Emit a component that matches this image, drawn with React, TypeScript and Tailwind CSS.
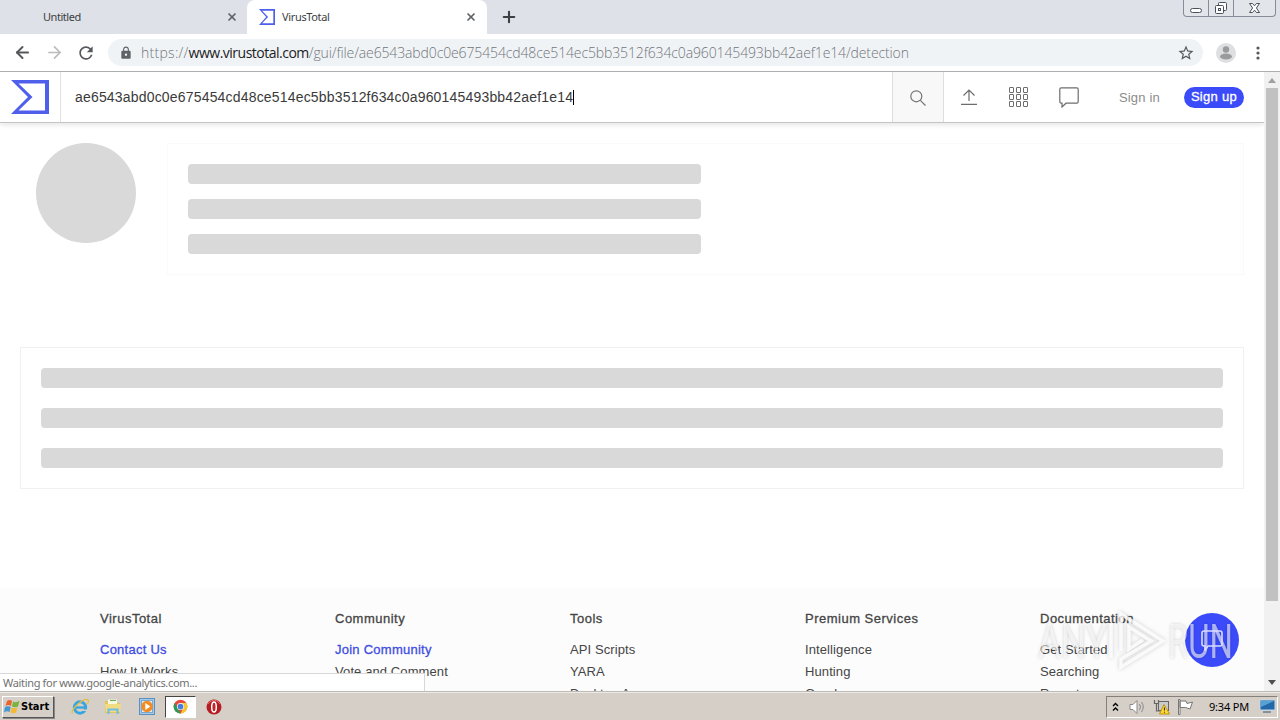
import { ArrowLeft, ArrowRight, Plus, X } from "lucide-react";
import { MdLock, MdRefresh, MdStarBorder } from "react-icons/md";

const HASH = "ae6543abd0c0e675454cd48ce514ec5bb3512f634c0a960145493bb42aef1e14";

const FOOTER_COLUMNS = [
  { title: "VirusTotal", links: ["Contact Us", "How It Works"], highlight: true },
  { title: "Community", links: ["Join Community", "Vote and Comment"], highlight: true },
  { title: "Tools", links: ["API Scripts", "YARA", "Desktop Apps"] },
  { title: "Premium Services", links: ["Intelligence", "Hunting", "Graph"] },
  { title: "Documentation", links: ["Get Started", "Searching", "Reports"] },
];

function VtLogo({ className }: { className: string }) {
  return (
    <svg viewBox="0 0 38 34" className={className} preserveAspectRatio="none" aria-hidden>
      <path
        fill="#4e5fec"
        fillRule="evenodd"
        d="M0 0H38V34H0L17 17ZM7.5 3.5L21.5 17L7.5 30.5H34V3.5Z"
      />
    </svg>
  );
}

function TabStrip() {
  return (
    <div className="flex h-[34px] bg-[#dee1e7] font-['Noto_Sans',sans-serif] text-[11px] text-[#3c4043]">
      <div className="flex w-[247px] items-center rounded-br-lg pl-[43px] pr-[9px]">
        <span className="flex-1 tracking-[-0.45px]">Untitled</span>
        <X size={12} strokeWidth={3.4} className="text-[#5f6368]" />
      </div>
      <div className="flex w-[240px] items-center rounded-t-lg bg-white pl-3 pr-[10px]">
        <VtLogo className="h-4 w-4" />
        <span className="ml-[7px] flex-1 tracking-[-0.35px]">VirusTotal</span>
        <X size={12} strokeWidth={3.4} className="text-[#5f6368]" />
      </div>
      <Plus size={18} strokeWidth={2.8} className="ml-[13px] mt-2 text-[#3c4043]" />
      <div className="ml-auto mr-1 flex h-[17px] w-[93px] rounded-b border border-t-0 border-[#878d98] bg-[#e2e5ea]">
        <div className="flex w-[25px] items-end justify-center border-r border-[#878d98] pb-[3px]">
          <div className="h-[5px] w-3 rounded-sm border border-[#4b505a] bg-white" />
        </div>
        <div className="flex w-[25px] items-center justify-center border-r border-[#878d98]">
          <svg width="14" height="14" viewBox="0 0 14 14" fill="#fff" stroke="#4b505a">
            <rect x="4.5" y="1.5" width="8" height="8" rx="1" />
            <rect x="1.5" y="4.5" width="8" height="8" rx="1" />
            <rect x="4.5" y="7.5" width="2" height="2" />
          </svg>
        </div>
        <div className="flex flex-1 items-center justify-center">
          <svg width="13" height="12" viewBox="0 0 13 12" fill="#fff" stroke="#4b505a">
            <path d="M1.5 1.5h3l2 2.3l2-2.3h3L8.4 6l3.1 4.5h-3l-2-2.3l-2 2.3h-3L4.6 6Z" />
          </svg>
        </div>
      </div>
    </div>
  );
}

function Toolbar() {
  return (
    <div className="flex h-[38px] items-center border-b border-[#acafad] bg-white pl-[13px] pr-5">
      <ArrowLeft size={19} strokeWidth={2.5} className="text-[#55585c]" />
      <ArrowRight size={19} strokeWidth={2.2} className="ml-[13px] text-[#babcbe]" />
      <MdRefresh size={20} className="ml-[12px] text-[#55585c]" />
      <div className="ml-[12px] flex h-[27px] w-[1095px] items-center rounded-full bg-[#f0f3f6] pl-[11px] pr-[8px]">
        <MdLock size={14} className="text-[#5f6368]" />
        <span className="ml-2 flex-1 whitespace-nowrap font-['Open_Sans',sans-serif] text-[14px] font-light tracking-[-0.13px] text-[#70757a]">
          <span className="tracking-[0.28px]">https://</span>
          <span className="font-normal tracking-[-0.5px] text-[#202124]">www.virustotal.com</span>/gui/file/{HASH}/detection
        </span>
        <MdStarBorder size={18} className="text-[#55585c]" />
      </div>
      <svg width="20" height="20" viewBox="0 0 20 20" className="ml-[13px]">
        <circle cx="10" cy="10" r="10" fill="#dedfe1" />
        <circle cx="10" cy="6.5" r="3.2" fill="#9a9b9d" />
        <ellipse cx="10" cy="13.5" rx="6" ry="3" fill="#9a9b9d" />
      </svg>
      <svg width="4" height="14" viewBox="0 0 4 14" className="ml-auto" fill="#55585c">
        <circle cx="2" cy="2" r="1.6" />
        <circle cx="2" cy="7" r="1.6" />
        <circle cx="2" cy="12" r="1.6" />
      </svg>
    </div>
  );
}

function Header() {
  return (
    <header className="relative flex h-[51px] items-center border-b border-[#c4c4c4] bg-white shadow-[0_2px_5px_rgba(0,0,0,0.1)]">
      <div className="flex h-full w-[61px] items-center border-r border-[#e2e2e2] pl-[11px]">
        <VtLogo className="h-[34px] w-[38px]" />
      </div>
      <div className="flex flex-1 items-center pl-[14px]">
        <span className="text-[14px] tracking-[0.18px] text-[#3a3a3a]">{HASH}</span>
        <span className="h-[15px] w-px bg-black" />
      </div>
      <div className="flex h-full w-[52px] items-center justify-center border-x border-[#dedede] bg-[#f8f8f8]">
        <svg width="16" height="16" viewBox="0 0 16 16" className="mt-px" fill="none" stroke="#747474" strokeWidth="1.2">
          <circle cx="6.3" cy="6.3" r="5.5" />
          <path d="M10.3 10.3L15.5 15.5" />
        </svg>
      </div>
      <div className="flex w-[320px] items-center">
        <svg width="16" height="16" viewBox="0 0 16 16" className="ml-[17px]" fill="none" stroke="#6d6d6d" strokeWidth="1.2">
          <path d="M8 12V1M2.5 6.5L8 1L13.5 6.5M0 15.4H16" />
        </svg>
        <svg width="19" height="20" viewBox="0 0 19 20" className="ml-[32px]" fill="none" stroke="#6d6d6d">
          {[0, 7, 14].map((y) =>
            [0, 7, 14].map((x) => <rect key={`${x}-${y}`} x={x + 0.5} y={y + 0.5} width="4" height="5" rx=".3" />)
          )}
        </svg>
        <svg width="20" height="21" viewBox="0 0 20 21" className="ml-[31px]" fill="none" stroke="#6d6d6d" strokeWidth="1.2">
          <path d="M2.2 .8H17.8Q19.2 .8 19.2 2.2V14.8Q19.2 16.2 17.8 16.2H7L3 20V16.2H2.2Q.8 16.2 .8 14.8V2.2Q.8 .8 2.2 .8Z" />
        </svg>
        <span className="ml-[40px] mt-px w-[65px] text-[13px] tracking-[0.15px] text-[#8c8c8c]">Sign in</span>
        <span className="flex h-[21px] w-[60px] items-center justify-center rounded-full bg-[#3b4bfa] text-[13px] tracking-[0.3px] text-white [-webkit-text-stroke:0.3px_white]">
          Sign up
        </span>
      </div>
    </header>
  );
}

/** Loading placeholders for the file report. */
function Skeleton() {
  return (
    <main className="px-5 pt-5">
      <div className="flex">
        <div className="ml-4 size-[100px] rounded-full bg-[#d9d9d9]" />
        <div className="ml-[31px] flex h-[132px] flex-1 flex-col gap-[15px] border border-[#fafafa] p-5">
          <div className="h-5 w-[513px] rounded bg-[#d9d9d9]" />
          <div className="h-5 w-[513px] rounded bg-[#d9d9d9]" />
          <div className="h-5 w-[513px] rounded bg-[#d9d9d9]" />
        </div>
      </div>
      <div className="mt-[72px] flex h-[142px] flex-col gap-5 border border-[#f0f0f0] p-5">
        <div className="h-5 rounded bg-[#d9d9d9]" />
        <div className="h-5 rounded bg-[#d9d9d9]" />
        <div className="h-5 rounded bg-[#d9d9d9]" />
      </div>
    </main>
  );
}

function Footer() {
  return (
    <footer className="mt-[99px] flex h-[130px] bg-[#fcfcfc] pl-[100px] pt-[21px] text-[13px] text-[#454545]">
      {FOOTER_COLUMNS.map((col) => (
        <div key={col.title} className="w-[235px] shrink-0 whitespace-nowrap">
          <h3 className="leading-5 tracking-[0.5px] [-webkit-text-stroke:0.3px_#454545]">{col.title}</h3>
          <ul className="mt-[10px] leading-[22px] tracking-[0.1px]">
            {col.links.map((link, i) => (
              <li
                key={link}
                className={
                  col.highlight && i === 0
                    ? "tracking-[0.25px] text-[#3f4de2] [-webkit-text-stroke:0.3px_#3f4de2]"
                    : ""
                }
              >
                {link}
              </li>
            ))}
          </ul>
        </div>
      ))}
    </footer>
  );
}

function Scrollbar() {
  return (
    <div className="flex w-4 flex-col items-center bg-[#f1f1f1]">
      <svg width="8" height="5" viewBox="0 0 8 5" className="mt-[6px]" fill="#a0a0a0">
        <path d="M4 0L8 5H0Z" />
      </svg>
      <div className="mt-[5px] h-[513px] w-3 bg-[#c1c1c1]" />
      <svg width="8" height="5" viewBox="0 0 8 5" className="mb-[6px] mt-auto" fill="#505050">
        <path d="M0 0H8L4 5Z" />
      </svg>
    </div>
  );
}

function Watermark() {
  return (
    <div className="absolute left-[1038px] top-[537px] flex h-[64px] items-center font-['Roboto',sans-serif] text-[49px] leading-none text-white/60 [text-shadow:0_0_4px_rgba(0,0,0,0.18)]">
      <span className="w-[71px]">
        <span className="inline-block origin-left scale-x-[0.72]">ANY</span>
      </span>
      <svg width="58" height="64" viewBox="0 0 58 64" fill="none" className="drop-shadow-[0_0_2px_rgba(0,0,0,0.22)]">
        <path d="M2 14V49M12 42V5L54 32L12 58V50L42 32L20 18V40L34 31" stroke="#fff" strokeOpacity=".8" strokeWidth="3.5" />
      </svg>
      <span className="ml-[1px] inline-block origin-left scale-x-[0.67]">RUN</span>
    </div>
  );
}

function Taskbar() {
  return (
    <div className="flex h-7 items-center border-t border-[#eeebe7] bg-[#d5cfc8] pl-[2px] pr-[2px]">
      <div className="flex h-[22px] w-[52px] items-center border border-b-[#555] border-l-white border-r-[#555] border-t-white pl-px shadow-[1px_1px_0_#888]">
        <svg width="17" height="16" viewBox="0 0 17 16" className="shrink-0">
          <path d="M3 2Q6 0 8 2L7 7Q4 5 1.5 7Z" fill="#e7652e" />
          <path d="M9 2.5Q12 4 15.5 2L14 7.5Q11 9 8 7.5Z" fill="#79b442" />
          <path d="M1 8Q4 6.5 6.7 8L5.5 13Q3 11.5 0 13.5Z" fill="#4098d5" />
          <path d="M7.7 8.5Q10 10 13.5 8.5L12 13.5Q9 15 6.4 13.5Z" fill="#f3ba31" />
        </svg>
        <span className="mt-px font-['DejaVu_Sans_Condensed','DejaVu_Sans',sans-serif] text-[11px] font-bold text-black">Start</span>
      </div>
      <svg width="18" height="18" viewBox="0 0 18 18" className="ml-[17px]">
        <circle cx="9" cy="9.5" r="5.7" fill="none" stroke="#37a6df" strokeWidth="3" />
        <path d="M4 9.5H15" stroke="#37a6df" strokeWidth="2.4" />
        <path d="M11 11.5H16V13H11Z" fill="#d5cfc8" />
        <path d="M1.5 15.5C-1 12 13-1 17 2C18 3 17 5 16 6" fill="none" stroke="#e7bd43" strokeWidth="1.3" />
      </svg>
      <svg width="18" height="18" viewBox="0 0 18 18" className="ml-[15px]">
        <path d="M1 3H7L8 5H16V15H1Z" fill="#e2c45c" />
        <path d="M4 1.5H13V6H4Z" fill="#f8f7df" />
        <path d="M6 2.5H12" stroke="#61ae5a" />
        <path d="M1 6H17L16 14H2Z" fill="#f1dc82" />
        <path d="M4.5 16V11.5H13.5V16" fill="none" stroke="#70bee7" strokeWidth="2.2" />
      </svg>
      <svg width="16" height="17" viewBox="0 0 16 17" className="ml-[17px]">
        <rect x=".5" y=".5" width="15" height="16" fill="#a8cae8" stroke="#5791c2" />
        <rect x="2.5" y="2.5" width="11" height="12" fill="#dfedf6" stroke="#78a8cd" />
        <circle cx="8" cy="8.5" r="5.7" fill="#f18b22" />
        <path d="M6.3 5L11.4 8.5L6.3 12Z" fill="#fff" />
      </svg>
      <div className="ml-[10px] flex h-[22px] w-[31px] items-center justify-center border border-b-white border-l-[#444] border-r-white border-t-[#444] bg-white">
        <svg width="15" height="15" viewBox="0 0 24 24">
          <circle cx="12" cy="12" r="11" fill="#e54b3d" />
          <path d="M2.5 6.5L7.5 15L12 23A11 11 0 0 1 2.5 6.5Z" fill="#269d57" />
          <path d="M12 23A11 11 0 0 0 21.5 6.5H12L16.5 15Z" fill="#f6c72e" />
          <circle cx="12" cy="12" r="5.7" fill="#fff" />
          <circle cx="12" cy="12" r="4.6" fill="#477edb" />
        </svg>
      </div>
      <svg width="16" height="16" viewBox="0 0 16 16" className="ml-[10px]">
        <circle cx="8" cy="8" r="7.5" fill="#b61c22" />
        <path d="M2 5Q8-3 14 5" fill="none" stroke="#dc6868" />
        <ellipse cx="8" cy="8" rx="2.3" ry="5" fill="#bd252b" stroke="#fff" strokeWidth="1.5" />
      </svg>
      <div className="ml-auto flex h-[22px] w-[172px] items-center border border-b-white border-l-[#858079] border-r-white border-t-[#858079] pl-[5px]">
        <svg width="7" height="10" viewBox="0 0 7 10" fill="none" stroke="#000" strokeWidth="1.4">
          <path d="M1 4L3.5 1.5L6 4M1 8.5L3.5 6L6 8.5" />
        </svg>
        <svg width="18" height="16" viewBox="0 0 18 16" className="ml-[10px]" fill="none" stroke="#898989">
          <path d="M1 5.5H4L8 1.5V14.5L4 10.5H1Z" fill="#fff" />
          <path d="M10.5 5Q12.5 8 10.5 11M12.5 3Q16 8 12.5 13" />
        </svg>
        <svg width="17" height="16" viewBox="0 0 17 16" className="ml-[6px]">
          <rect x="5.5" y="2.5" width="10" height="9" fill="#c9cbcb" stroke="#666" />
          <path d="M1.5 1V4.5H5.5V1M3.5 4V12H7M8 14H14" fill="none" stroke="#666" strokeWidth="1.2" />
          <path d="M11 5.5L16.5 15H6.5Z" fill="#ffda35" stroke="#bc930f" />
          <path d="M11.4 8.5V11.5M11.4 12.7V13.7" stroke="#222" />
        </svg>
        <svg width="17" height="16" viewBox="0 0 17 16" className="ml-[7px]" fill="#fff" stroke="#777">
          <path d="M1.5 .5H3V15.5H1.5ZM3 2H9L10 4.5L15.5 3L13 10L8.5 8.5H3Z" />
        </svg>
        <span className="ml-[15px] mt-px whitespace-nowrap font-['Noto_Sans',sans-serif] text-[11px] tracking-[-0.2px] text-black">9:34 PM</span>
        <svg width="17" height="15" viewBox="0 0 17 15" className="ml-auto mr-px">
          <rect x="1" y="1" width="15" height="10" fill="#2468aa" stroke="#c3d9e7" />
          <path d="M2 2H15L2 8Z" fill="#55a2d3" />
          <path d="M4 13H12" stroke="#6b7f90" strokeWidth="1.5" />
        </svg>
      </div>
    </div>
  );
}

export default function App() {
  return (
    <div className="h-[720px] w-[1280px] overflow-hidden bg-white font-['Liberation_Sans',sans-serif]">
      <TabStrip />
      <Toolbar />
      <div className="relative flex h-[620px] overflow-hidden border-b border-[#bdbab5]">
        <div className="w-[1264px] overflow-hidden">
          <Header />
          <Skeleton />
          <Footer />
        </div>
        <Scrollbar />
        <div className="absolute bottom-0 left-0 flex h-[18px] w-[425px] items-center border-r border-t border-[#d7d7d7] bg-white pl-[3px] pt-px font-['Noto_Sans',sans-serif] text-[11px] tracking-[-0.33px] text-[#707070]">
          Waiting for www.google-analytics.com...
        </div>
        <div className="absolute left-[1185px] top-[541px] size-[54px] rounded-full bg-[#3b4bfa]" />
        <Watermark />
        <svg
          width="24"
          height="22"
          viewBox="0 0 24 22"
          className="absolute left-[1200px] top-[557px]"
          fill="none"
          stroke="#d9dcff"
          strokeWidth="1.6"
        >
          <path d="M4 2H20Q22 2 22 4V15Q22 17 20 17H8L5 21V17H4Q2 17 2 15V4Q2 2 4 2Z" />
        </svg>
      </div>
      <Taskbar />
    </div>
  );
}
